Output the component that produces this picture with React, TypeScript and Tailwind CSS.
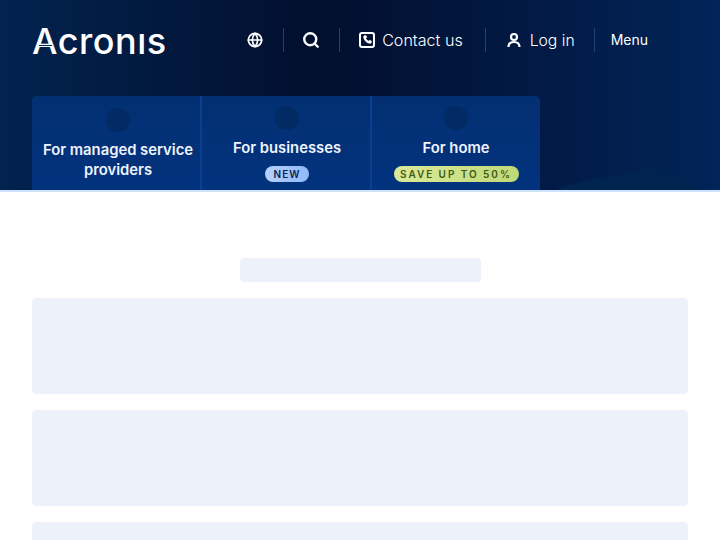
import React from "react";
import { Globe, Search, Phone } from "lucide-react";

type Tab = { title: React.ReactNode; badge?: React.ReactNode; badgeClass?: string; cell: string; iconTop: string; textTop: string };

const tabs: Tab[] = [
  {
    title: <>For managed service<br />providers</>,
    cell: "w-[170px] pl-[2px] shadow-[inset_-2px_0_0_#0a3f8e]",
    iconTop: "mt-[12px]",
    textTop: "mt-[8px]",
  },
  {
    title: "For businesses",
    badge: "NEW",
    badgeClass: "w-[44px] bg-gradient-to-r from-[#b5d1fb] to-[#8fb9f7] text-[#0a2354] tracking-[1px]",
    cell: "w-[170px] shadow-[inset_-2px_0_0_#0a3f8e]",
    iconTop: "mt-[10px]",
    textTop: "mt-[8px]",
  },
  {
    title: "For home",
    badge: "SAVE UP TO 50%",
    badgeClass: "w-[125px] bg-gradient-to-r from-[#dbe99a] to-[#bfd977] text-[#3d5a16] tracking-[1.95px]",
    cell: "w-[168px]",
    iconTop: "mt-[10px]",
    textTop: "mt-[8px]",
  },
];

const Divider = () => <div className="h-6 w-px bg-[#1d4276]" />;

const Skeleton = () => <div className="h-24 rounded bg-[#ecf1fa]" />;

export default function App() {
  return (
    <div className="h-[540px] w-[720px] overflow-hidden bg-white font-['Inter',sans-serif] text-white">
      <header className="relative flex h-[192px] flex-col border-b-2 border-[#cfe2fb] bg-gradient-to-r from-[#01234f] via-[#020f2e] via-45% to-[#012459] pl-8">
        <svg className="absolute bottom-0 right-[16px] text-[#01234f]" width="150" height="24" viewBox="0 0 150 24" fill="currentColor" aria-hidden="true">
          <path d="M0 24 C 30 14, 50 10, 70 8 L 95 0 L 125 10 L 150 24 Z" />
        </svg>
        <div className="relative flex h-[80px] items-center justify-between pr-[72px]">
          <div className="relative mt-[1px] text-[36px] font-medium leading-none tracking-[0.5px]" aria-label="Acronis">
            Acronıs
            <span className="absolute left-[7px] top-[22px] h-[1.5px] w-[13px] bg-[#01204a]" />
          </div>
          <nav className="flex items-center text-[16.1px] font-light">
            <Globe size={16} strokeWidth={2.6} />
            <div className="mx-5"><Divider /></div>
            <div className="-ml-[2px] -mr-px"><Search size={18} strokeWidth={3.2} /></div>
            <div className="mx-5"><Divider /></div>
            <span className="-ml-px flex h-4 w-4 items-center justify-center rounded-[3px] border-2 border-white">
              <Phone size={9} strokeWidth={2.5} fill="currentColor" />
            </span>
            <span className="ml-[7px] mr-[2px]">Contact us</span>
            <div className="mx-5"><Divider /></div>
            <svg width="16" height="16" viewBox="0 0 16 16" fill="none" stroke="currentColor" strokeWidth="2.2" aria-hidden="true">
              <circle cx="8" cy="5" r="3" />
              <path d="M2.5 15 C 2.5 11, 5 10, 8 10 C 11 10, 13.5 11, 13.5 15" />
            </svg>
            <span className="ml-2 pt-px text-[15.7px]">Log in</span>
            <div className="ml-[19px] mr-4"><Divider /></div>
            <span className="text-sm font-normal">Menu</span>
          </nav>
        </div>
        <div className="relative mt-4 flex h-[94px] w-[508px] overflow-hidden rounded-t-[5px] bg-gradient-to-b from-[#032f72] to-[#03337e]">
          {tabs.map((t, i) => (
            <div key={i} className={`flex flex-col items-center ${t.cell}`}>
              <div className={`h-6 w-6 shrink-0 rounded-full bg-[#022a63] ${t.iconTop}`} />
              <div className={`text-center text-[14.8px] font-semibold leading-5 text-[#eef4fe] ${t.textTop}`}>{t.title}</div>
              {t.badge && (
                <div className={`mt-2 flex h-4 items-center justify-center rounded-full text-[10px] font-semibold ${t.badgeClass}`}>
                  {t.badge}
                </div>
              )}
            </div>
          ))}
        </div>
      </header>
      <main className="flex flex-col gap-4 px-8 pt-[66px]">
        <div className="mx-auto h-6 w-[241px] rounded bg-[#ecf1fa]" />
        <Skeleton />
        <Skeleton />
        <Skeleton />
      </main>
    </div>
  );
}
